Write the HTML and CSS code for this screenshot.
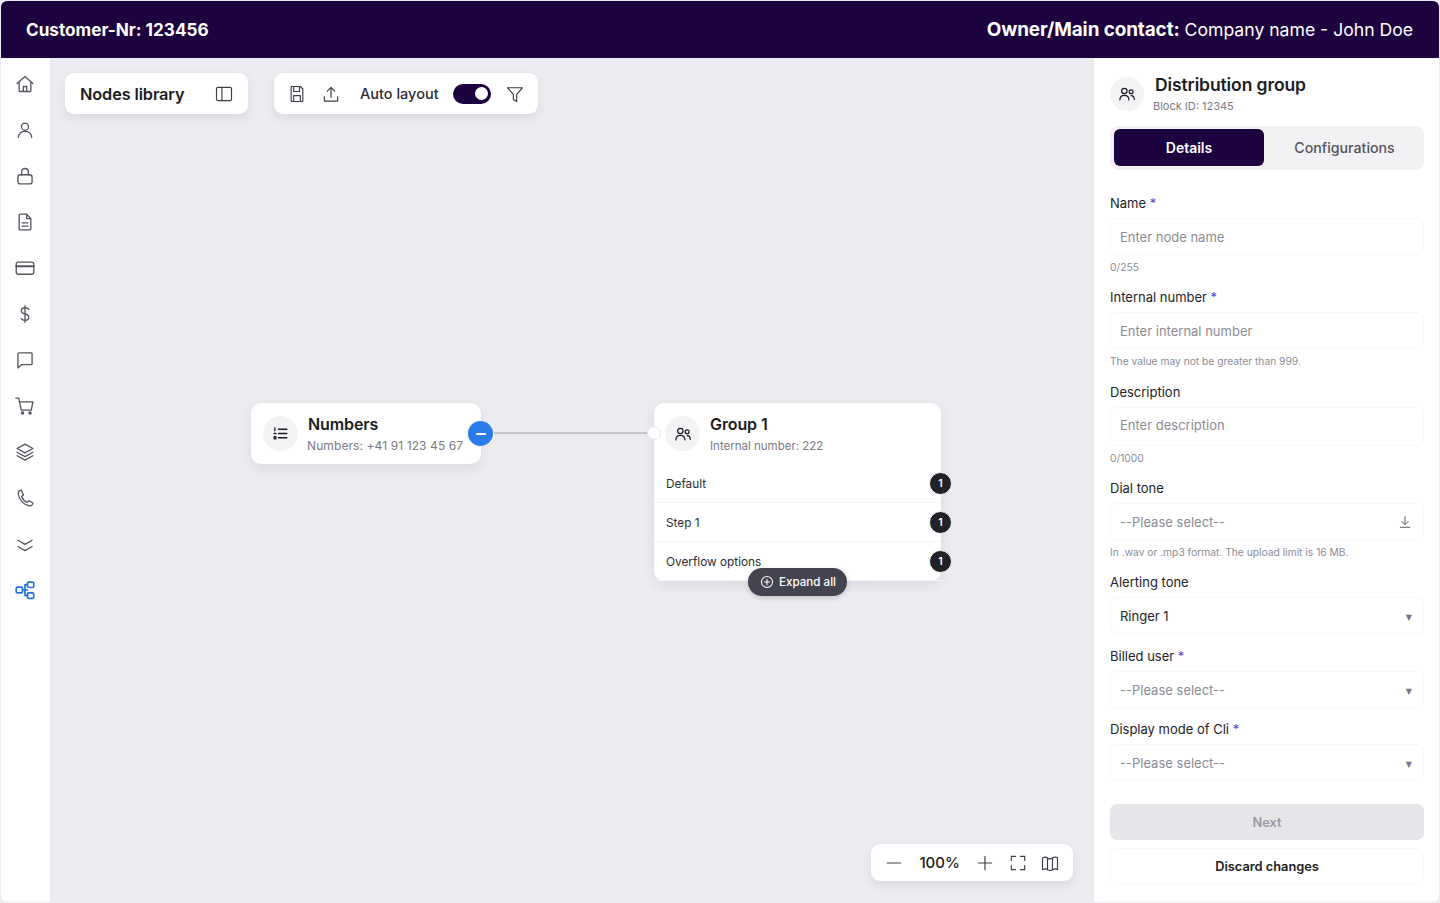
FILE: index.html
```html
<!DOCTYPE HTML>
<html>

<head>
    <meta charset="utf-8">
    <title>Distribution group</title>
    <link rel="stylesheet" href="styles.css">
</head>

<body>
    <svg class="sprite" width="0" height="0">
        <symbol id="users" viewBox="0 0 24 24">
            <circle cx="8.5" cy="8" r="3.6"></circle>
            <path d="M2.5 20c0-3.8 2.5-6.2 6-6.2s6 2.4 6 6.2"></path>
            <circle cx="17.5" cy="9" r="2.6"></circle>
            <path d="M17.5 14.2c2.6 0 4.2 2 4.2 5"></path>
        </symbol>
    </svg>

    <div class="app">
        <header class="topbar">
            <div class="customer">Customer-Nr: 123456</div>
            <div class="owner"><strong>Owner/Main contact:</strong> Company name - John Doe</div>
        </header>

        <div class="main">
            <nav class="sidebar">
                <svg class="icon" viewBox="0 0 24 24"><path d="M2.5 11.5 12 3l9.5 8.5M5 9.5V20a1 1 0 0 0 1 1h12a1 1 0 0 0 1-1V9.500M10 21v-6h4v6"></path></svg>
                <svg class="icon" viewBox="0 0 24 24"><circle cx="12" cy="8" r="4.200"></circle><path d="M4 21c0-4.700 3.500-7.500 8-7.500s8 2.800 8 7.500"></path></svg>
                <svg class="icon" viewBox="0 0 24 24"><rect x="3.500" y="10.500" width="17" height="11" rx="3"></rect><path d="M8 10.500V7a4 4 0 0 1 8 0v3.500"></path></svg>
                <svg class="icon" viewBox="0 0 24 24"><path d="M6 2.500h8l5 5.500v12.500a1 1 0 0 1-1 1H6a1 1 0 0 1-1-1v-17a1 1 0 0 1 1-1zM14 2.500V8h5M8.500 13h7M8.500 17h7"></path></svg>
                <svg class="icon" viewBox="0 0 24 24"><rect x="1.500" y="5" width="21" height="14.500" rx="2.500"></rect><path class="thick" d="M1.500 10h21"></path></svg>
                <svg class="icon" viewBox="0 0 24 24"><path d="M12 2v20M16.500 6.500C15.700 5.200 14.200 4.500 12 4.500c-2.800 0-4.500 1.500-4.500 3.700S9.300 11.400 12 12s4.500 1.600 4.500 3.800-1.700 3.700-4.500 3.700c-2.200 0-3.700-.7-4.500-2"></path></svg>
                <svg class="icon" viewBox="0 0 24 24"><path d="M4.500 3.500h15a1 1 0 0 1 1 1v12a1 1 0 0 1-1 1H8l-4.500 4V4.500a1 1 0 0 1 1-1z"></path></svg>
                <svg class="icon" viewBox="0 0 24 24"><path d="M1 2.500h3.500L7.500 17h12l2-10H5.500"></path><circle class="solid" cx="9" cy="20.500" r="1.300"></circle><circle class="solid" cx="18" cy="20.500" r="1.300"></circle></svg>
                <svg class="icon" viewBox="0 0 24 24"><path d="m12 2.500 9.500 5.300-9.500 5.200-9.500-5.200zM2.500 12.300l9.500 5.200 9.500-5.200M2.500 16.500l9.500 5.200 9.500-5.200"></path></svg>
                <svg class="icon" viewBox="0 0 24 24"><path d="M7.500 2.500C5 3 3.500 4.500 4 7.500 5 14 10 20 17 21.300c2.500.4 4.200-1 4.500-3.300l-4.800-2.700-2.200 2c-3-1.200-5.500-4-6.500-7l2.200-1.800z"></path></svg>
                <svg class="icon" viewBox="0 0 24 24"><path d="m3.500 7.500 8.500 5 8.500-5M3.500 15l8.500 5 8.500-5"></path></svg>
                <svg class="icon blue" viewBox="0 0 24 24"><rect x="1.500" y="8.500" width="7.500" height="7" rx="1.500"></rect><rect x="15" y="2.500" width="7.500" height="6.500" rx="1.500"></rect><rect x="15" y="15.500" width="7.500" height="6.500" rx="1.500"></rect><path d="M9 12h6M12 5.500v13M12 5.500h3M12 18.500h3"></path></svg>
            </nav>

            <section class="canvas">
                <div class="toolbars">
                    <div class="toolbar library">
                        <span class="toolbar-title">Nodes library</span>
                        <svg class="tool" viewBox="0 0 24 24"><rect x="3" y="4" width="18" height="16" rx="2"></rect><path d="M9.500 4v16"></path></svg>
                    </div>
                    <div class="toolbar actions">
                        <svg class="tool" viewBox="0 0 24 24"><path d="M5 3h11l3 3v14a1 1 0 0 1-1 1H6a1 1 0 0 1-1-1zM8 3v6h7V3M8 21v-7h8v7"></path></svg>
                        <svg class="tool" viewBox="0 0 24 24"><path d="M12 16V4M7.500 8.500 12 4l4.500 4.500M4 15v5.500h16V15"></path></svg>
                        <span class="toolbar-label">Auto layout</span>
                        <span class="switch"><span class="knob"></span></span>
                        <svg class="tool" viewBox="0 0 24 24"><path d="M3 4.500h18l-7 8V21l-4-2.500v-6z"></path></svg>
                    </div>
                </div>

                <div class="edge"></div>

                <div class="node numbers">
                    <div class="node-head">
                        <span class="round-icon">
                            <svg class="list-icon" viewBox="0 0 24 24"><path d="M9 6h12M9 12h12M9 18h12M4 4v4M3 12h2.500M3 16.500h2.500v3H3z"></path></svg>
                        </span>
                        <div>
                            <div class="node-title">Numbers</div>
                            <div class="node-sub">Numbers: +41 91 123 45 67</div>
                        </div>
                    </div>
                    <span class="collapse"><span class="minus"></span></span>
                </div>

                <div class="node group">
                    <span class="inlet"></span>
                    <div class="node-head">
                        <span class="round-icon">
                            <svg class="users-icon"><use href="#users"></use></svg>
                        </span>
                        <div>
                            <div class="node-title">Group 1</div>
                            <div class="node-sub">Internal number: 222</div>
                        </div>
                    </div>
                    <div class="step">Default<span class="badge">1</span></div>
                    <div class="step">Step 1<span class="badge">1</span></div>
                    <div class="step">Overflow options<span class="badge">1</span></div>
                    <div class="expand">
                        <svg class="expand-icon" viewBox="0 0 24 24"><circle cx="12" cy="12" r="9.500"></circle><path d="M12 7.500v9M7.500 12h9"></path></svg>
                        Expand all
                    </div>
                </div>

                <div class="toolbar zoombar">
                    <svg class="tool" viewBox="0 0 24 24"><path d="M4 12h16"></path></svg>
                    <span class="zoom-value">100%</span>
                    <svg class="tool" viewBox="0 0 24 24"><path d="M4 12h16M12 4v16"></path></svg>
                    <svg class="tool" viewBox="0 0 24 24"><path d="M4 9V4h5M15 4h5v5M20 15v5h-5M9 20H4v-5"></path></svg>
                    <svg class="tool" viewBox="0 0 24 24"><path d="M3 6c3-1.500 4.500-1.500 6 0s3 1.500 6 0 4.500-1.500 6 0v14c-1.500-1.500-3-1.500-6 0s-4.500 1.500-6 0-3-1.500-6 0zM9 6v14M15 6v14"></path></svg>
                </div>
            </section>

            <aside class="panel">
                <div class="panel-head">
                    <span class="round-icon">
                        <svg class="users-icon"><use href="#users"></use></svg>
                    </span>
                    <div class="panel-text">
                        <div class="panel-title">Distribution group</div>
                        <div class="panel-sub">Block ID: 12345</div>
                    </div>
                </div>

                <div class="tabs">
                    <div class="tab active">Details</div>
                    <div class="tab">Configurations</div>
                </div>

                <div class="field">
                    <div class="label">Name <span class="req">*</span></div>
                    <div class="input">Enter node name</div>
                    <div class="help">0/255</div>
                </div>
                <div class="field roomy">
                    <div class="label">Internal number <span class="req">*</span></div>
                    <div class="input">Enter internal number</div>
                    <div class="help">The value may not be greater than 999.</div>
                </div>
                <div class="field">
                    <div class="label">Description</div>
                    <div class="input tall">Enter description</div>
                    <div class="help">0/1000</div>
                </div>
                <div class="field">
                    <div class="label">Dial tone</div>
                    <div class="input">--Please select--
                        <svg class="download" viewBox="0 0 24 24"><path d="M12 3v13M6.500 11l5.500 5.500 5.500-5.500M4 21h16"></path></svg>
                    </div>
                    <div class="help">In .wav or .mp3 format. The upload limit is 16 MB.</div>
                </div>
                <div class="field">
                    <div class="label">Alerting tone</div>
                    <div class="input filled">Ringer 1<span class="caret">▼</span></div>
                </div>
                <div class="field tight">
                    <div class="label">Billed user <span class="req">*</span></div>
                    <div class="input">--Please select--<span class="caret">▼</span></div>
                </div>
                <div class="field last">
                    <div class="label">Display mode of Cli <span class="req">*</span></div>
                    <div class="input">--Please select--<span class="caret">▼</span></div>
                </div>

                <button class="btn next">Next</button>
                <button class="btn discard">Discard changes</button>
            </aside>
        </div>
    </div>
</body>

</html>
```

FILE: styles.css
```css
* {
    box-sizing: border-box;
}

body {
    margin: 0;
    height: 903px;
    overflow: hidden;
    background-color: #ebebf0;
    font-family: Inter, "Liberation Sans", sans-serif;
    color: #1b1b22;
}

.sprite {
    position: absolute;
}

svg {
    fill: none;
    stroke-linecap: round;
    stroke-linejoin: round;
}

.app {
    display: flex;
    flex-direction: column;
    height: 901px;
    margin: 1px 1px 0;
    border-radius: 6px;
    overflow: hidden;
}

.topbar {
    display: flex;
    flex: none;
    align-items: center;
    justify-content: space-between;
    height: 57px;
    padding: 0 26px 0 25px;
    background-color: #1c033f;
    color: #fff;
}

.customer {
    font-size: 17.150px;
    font-weight: 700;
}

.owner {
    font-size: 17.600px;
}

.owner strong {
    font-size: 18.900px;
    font-weight: 700;
    letter-spacing: -0.1px;
}

.main {
    display: flex;
    flex: 1;
    min-height: 0;
}

.sidebar {
    display: flex;
    flex: none;
    flex-direction: column;
    align-items: center;
    gap: 26px;
    width: 49px;
    padding: 16px 2px 0 0;
    background-color: #fff;
}

.icon {
    width: 20px;
    height: 20px;
    stroke: #55555f;
    stroke-width: 1.600;
}

.icon .thick {
    stroke-width: 2.400;
}

.icon .solid {
    fill: #55555f;
}

.icon.blue {
    stroke: #2272d9;
    stroke-width: 2;
}

.canvas {
    position: relative;
    flex: 1;
    background-color: #ebebf0;
}

.toolbars {
    display: flex;
    gap: 26px;
    padding: 15px 0 0 15px;
}

.toolbar {
    display: flex;
    align-items: center;
    height: 41px;
    background-color: #fff;
    border-radius: 9px;
    box-shadow: 0 4px 10px rgba(70, 70, 90, 0.1);
}

.library {
    justify-content: space-between;
    width: 183px;
    padding: 0 14px 0 15px;
}

.toolbar-title {
    font-size: 16.300px;
    font-weight: 600;
    letter-spacing: -0.1px;
}

.tool {
    flex: none;
    width: 20px;
    height: 20px;
    stroke: #3d3d47;
    stroke-width: 1.400;
}

.actions {
    width: 264px;
    padding: 0 13px 0 13px;
}

.actions .tool + .tool {
    margin-left: 14px;
}

.toolbar-label {
    margin-left: 19px;
    font-size: 14.500px;
    font-weight: 500;
    color: #2c2c35;
}

.switch {
    display: flex;
    align-items: center;
    justify-content: flex-end;
    width: 38px;
    height: 20px;
    margin: 0 14px;
    padding-right: 3px;
    background-color: #1c033f;
    border-radius: 10px;
}

.knob {
    width: 13px;
    height: 13px;
    background-color: #fff;
    border-radius: 50%;
}

.edge {
    position: absolute;
    left: 440px;
    top: 374px;
    width: 165px;
    height: 2px;
    background-color: #c6c6cf;
}

.node {
    position: absolute;
    top: 345px;
    background-color: #fff;
    border-radius: 10px;
    box-shadow: 0 4px 12px rgba(70, 70, 90, 0.1);
}

.numbers {
    left: 201px;
    width: 230px;
    height: 61px;
}

.group {
    left: 604px;
    width: 287px;
    height: 178px;
}

.node-head {
    display: flex;
    align-items: center;
    gap: 10px;
    height: 61px;
    padding-left: 12px;
}

.group .node-head {
    padding-left: 11px;
}

.round-icon {
    display: flex;
    flex: none;
    align-items: center;
    justify-content: center;
    width: 35px;
    height: 35px;
    background-color: #f3f3f5;
    border-radius: 50%;
}

.list-icon {
    width: 17px;
    height: 17px;
    stroke: #1b1b22;
    stroke-width: 1.800;
}

.users-icon {
    width: 18px;
    height: 18px;
    stroke: #1b1b22;
    stroke-width: 1.600;
}

.node-title {
    margin-top: 1px;
    font-size: 16px;
    font-weight: 600;
    line-height: 20px;
    letter-spacing: -0.1px;
}

.node-sub {
    margin-top: 4px;
    font-size: 11.500px;
    line-height: 16px;
    color: #7a7a85;
}

.numbers .node-sub {
    margin-left: -1px;
    font-size: 12px;
    letter-spacing: 0.1px;
}

.collapse {
    position: absolute;
    right: -12px;
    top: 18px;
    display: flex;
    align-items: center;
    justify-content: center;
    width: 25px;
    height: 25px;
    background-color: #2a7de8;
    border-radius: 50%;
    box-shadow: 0 0 0 1px #f1f1f5;
}

.minus {
    width: 10px;
    height: 2px;
    background-color: #fff;
    border-radius: 1px;
}

.inlet {
    position: absolute;
    left: -7px;
    top: 23px;
    width: 14px;
    height: 14px;
    background-color: #fff;
    border: 1px solid #e6e6eb;
    border-radius: 50%;
}

.step {
    position: relative;
    display: flex;
    align-items: center;
    height: 39px;
    padding: 2px 0 0 12px;
    border-bottom: 1px solid #f6f6f8;
    font-size: 11.800px;
    color: #2c2c35;
}

.step:last-of-type {
    border-bottom: none;
}

.badge {
    position: absolute;
    right: -11px;
    top: 8px;
    display: flex;
    align-items: center;
    justify-content: center;
    width: 23px;
    height: 23px;
    background-color: #212127;
    border: 1px solid #fff;
    border-radius: 50%;
    font-size: 10.500px;
    font-weight: 600;
    color: #fff;
}

.expand {
    position: absolute;
    left: 94px;
    top: 165px;
    display: flex;
    align-items: center;
    gap: 5px;
    width: 99px;
    height: 28px;
    padding: 0 0 1px 12px;
    background-color: #43444f;
    border-radius: 14px;
    box-shadow: 0 2px 5px rgba(40, 40, 50, 0.2);
    font-size: 11.600px;
    font-weight: 500;
    white-space: nowrap;
    color: #fff;
}

.expand-icon {
    flex: none;
    width: 14px;
    height: 14px;
    stroke: #fff;
    stroke-width: 1.800;
}

.zoombar {
    position: absolute;
    right: 20px;
    bottom: 21px;
    justify-content: space-between;
    width: 202px;
    height: 37px;
    padding: 0 13px;
}

.zoom-value {
    margin: 0 3px;
    font-size: 15px;
    font-weight: 500;
}

.panel {
    flex: none;
    width: 345px;
    margin-left: 1px;
    padding: 19px 15px 0 16px;
    background-color: #fff;
}

.panel-head {
    display: flex;
    gap: 9px;
    height: 34px;
}

.panel-head .round-icon {
    width: 34px;
    height: 34px;
}

.panel-title {
    margin: -3px 0 0 2px;
    font-size: 17.500px;
    font-weight: 600;
    line-height: 22px;
    letter-spacing: -0.1px;
}

.panel-sub {
    margin-top: 3px;
    font-size: 11px;
    line-height: 14px;
    color: #7a7a85;
}

.tabs {
    display: flex;
    height: 44px;
    margin: 15px 0 24px;
    padding: 3px 4px 4px;
    background-color: #f2f2f5;
    border-radius: 8px;
}

.tab {
    display: flex;
    flex: 1;
    align-items: center;
    justify-content: center;
    padding-left: 5px;
    border-radius: 6px;
    font-size: 14.200px;
    font-weight: 500;
    color: #53535e;
}

.tab.active {
    flex: none;
    width: 150px;
    padding-left: 0;
    background-color: #1c033f;
    font-size: 14px;
    font-weight: 600;
    color: #fff;
}

.field {
    margin-bottom: 13px;
}

.field.roomy {
    margin-bottom: 14px;
}

.field.tight {
    margin-bottom: 12px;
}

.field.last {
    margin-bottom: 23px;
}

.label {
    height: 18px;
    margin-bottom: 6px;
    font-size: 13px;
    font-weight: 400;
    line-height: 18px;
    color: #22222a;
}

.req {
    color: #5a3fe0;
}

.input {
    position: relative;
    display: flex;
    align-items: center;
    height: 37px;
    padding-left: 9px;
    border: 1px solid #f8f8fa;
    border-radius: 6px;
    font-size: 13px;
    color: #8c8c96;
}

.input.tall {
    height: 39px;
    padding-bottom: 3px;
}

.input.filled {
    color: #22222a;
}

.help {
    height: 15px;
    margin-top: 5px;
    font-size: 10.250px;
    line-height: 14px;
    color: #8c8c96;
}

.caret {
    position: absolute;
    right: 11px;
    top: 15px;
    font-family: "DejaVu Sans", sans-serif;
    font-size: 8px;
    color: #77777f;
}

.download {
    position: absolute;
    right: 11px;
    top: 11px;
    width: 14px;
    height: 14px;
    stroke: #55555f;
    stroke-width: 1.700;
}

.btn {
    display: block;
    width: 100%;
    height: 36px;
    border-radius: 7px;
    font-family: inherit;
    font-size: 12.800px;
    font-weight: 600;
}

.next {
    margin-bottom: 8px;
    background-color: #e5e5ea;
    border: none;
    color: #9a9aa3;
}

.discard {
    background-color: #fff;
    border: 1px solid #f8f8fa;
    color: #1b1b22;
}
```
